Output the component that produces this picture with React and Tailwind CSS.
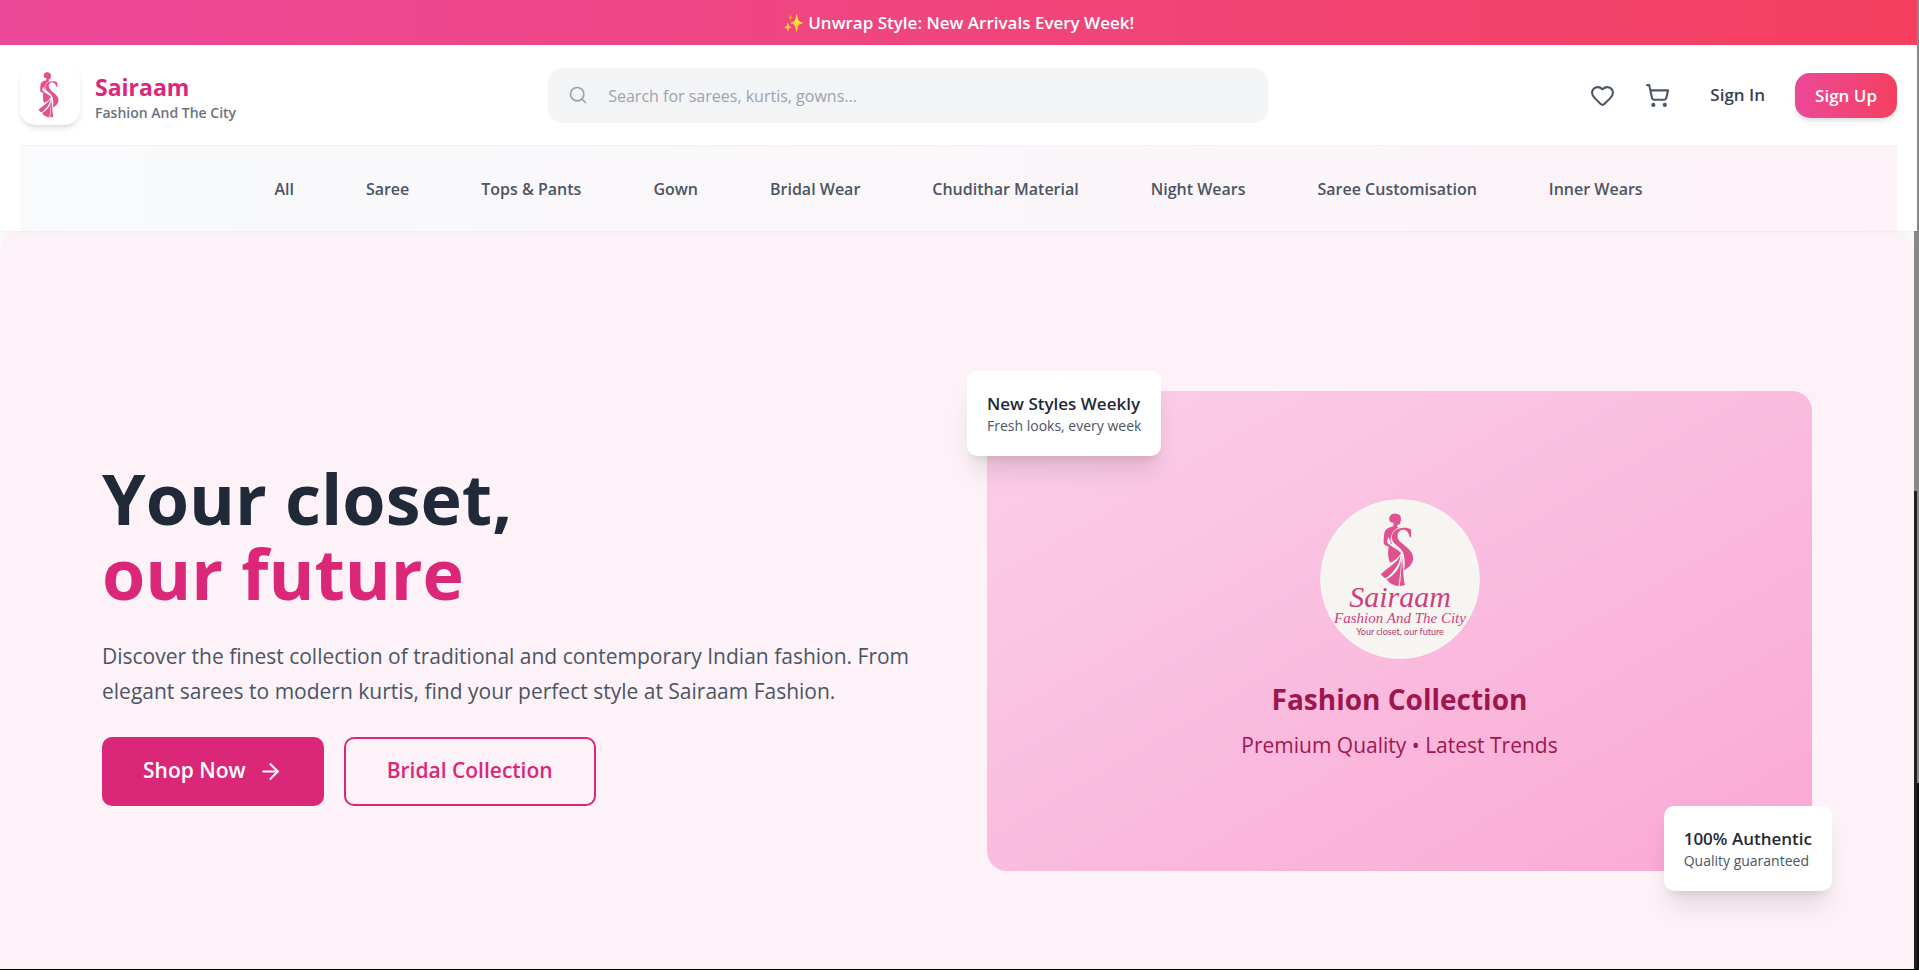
import { Heart, ShoppingCart, Search, ArrowRight } from 'lucide-react'

const categories = [
  'All', 'Saree', 'Tops & Pants', 'Gown', 'Bridal Wear',
  'Chudithar Material', 'Night Wears', 'Saree Customisation', 'Inner Wears',
]

// Lady draped in a saree with the S of the brand
const Figure = (props) => (
  <svg viewBox="238 100 100 220" fill="#e0528f" aria-hidden="true" {...props}>
    <path d="M268 108C272 101 284 100 290 103C297 105 301 110 299 116L301 122L298 124L298 131C296 136 291 133 289 136L287 146L277 143L278 129C272 130 266 126 265 120C264 115 265 111 268 108Z" />
    <path d="M283 138C270 141 258 144 252 154C248 166 249 176 248 188C249 196 256 198 263 200L266 195C261 191 258 188 259 182L262 171L266 179C268 184 270 186 268 190L274 193C268 184 268 176 271 166C274 156 282 149 292 143Z" />
    <path d="M330 150C318 140 290 143 279 155C269 167 271 182 282 192C294 202 307 210 309 228C311 245 313 256 308 270C324 264 337 248 336 234C335 212 313 200 300 188C287 177 286 160 298 152C310 146 322 152 326 172L330 172Z" />
    <path d="M265 193C276 204 293 208 300 220C292 234 279 244 268 248C260 236 260 208 265 193Z" />
    <path d="M298 226C290 245 262 262 240 281C244 287 248 291 254 294C276 278 296 255 298 226Z" />
    <path d="M300 232C300 262 280 285 257 297C264 306 272 314 292 318C297 290 300 262 300 232Z" />
    <path d="M303 226L306 270C307 290 309 306 312 314L296 318C300 290 301 255 303 226Z" />
  </svg>
)

const Emblem = () => (
  <svg viewBox="0 0 160 160" className="h-40 w-40 rounded-full" role="img" aria-label="Sairaam">
    <circle cx="80" cy="80" r="80" fill="#f6f5f2" />
    <Figure x="60" y="14" width="34" height="74" />
    <g textAnchor="middle" fill="#cf3f7c" fontStyle="italic" fontFamily="'Liberation Serif', serif">
      <text x="80" y="108" fontSize="30">Sairaam</text>
      <text x="80" y="124" fontSize="15">Fashion And The City</text>
    </g>
    <text x="80" y="136" fontSize="9" textAnchor="middle" fill="#b23a6d" fontFamily="Lato, sans-serif">Your closet, our future</text>
  </svg>
)

const Badge = ({ title, text, className }) => (
  <div className={`absolute rounded-[10px] bg-white p-5 shadow-xl ${className}`}>
    <div className="text-[17px] font-semibold leading-[25px] text-[#1f2937]">{title}</div>
    <div className="text-sm leading-5 text-[#4b5563]">{text}</div>
  </div>
)

export default function App() {
  return (
    <div className="flex min-h-screen flex-col border-b border-black bg-slate-50 font-['Open_Sans',sans-serif]">
      <header className="relative z-10 border-r-2 border-[#888] bg-white shadow-xs">
        <div className="bg-gradient-to-r from-[#ec4899] to-[#f43f5e] py-3 text-center text-[17px] font-semibold leading-[21px] text-white">
          ✨ Unwrap Style: New Arrivals Every Week!
        </div>

        <div className="px-5">
          <div className="flex h-[100px] items-center justify-between">
            <a href="#home" className="flex items-center gap-[15px]">
              <span className="flex h-15 w-15 items-center justify-center rounded-[15px] bg-white pr-1 shadow-md">
                <Figure className="h-[46px] w-[21px]" />
              </span>
              <span className="flex flex-col pt-2">
                <span className="text-[23px] font-bold leading-7 text-[#db2777]">Sairaam</span>
                <span className="text-sm font-semibold leading-6 text-[#6b7280]">Fashion And The City</span>
              </span>
            </a>

            <label className="flex h-[55px] max-w-[720px] flex-1 items-center rounded-[15px] bg-[#f3f4f6] px-5">
              <Search size={20} strokeWidth={2} className="text-[#9ca3af]" />
              <input type="text" aria-label="Search" placeholder="Search for sarees, kurtis, gowns..."
                className="ml-5 flex-1 bg-transparent pt-[2px] text-base placeholder:text-[#9ca3af] focus:outline-none" />
            </label>

            <div className="flex items-center">
              <button aria-label="Wishlist" className="mr-[10px] p-[10px] text-[#4b5563]"><Heart size={25} /></button>
              <button aria-label="Cart" className="p-[10px] text-[#4b5563]"><ShoppingCart size={25} /></button>
              <a href="#signin" className="pr-5 pl-[30px] text-[17px] font-semibold text-[#374151]">Sign In</a>
              <a href="#signup" className="ml-[10px] rounded-[15px] bg-gradient-to-r from-[#ec4899] to-[#f43f5e] px-5 py-[10px] text-[17px] font-semibold leading-[25px] text-white shadow-md">Sign Up</a>
            </div>
          </div>

          <nav className="flex h-[86px] items-center justify-center gap-[72px] border-t border-[#f3f4f6] bg-gradient-to-r from-[#f8fafc] to-[#fdf2f8] text-base font-semibold text-[#4b5563]">
            {categories.map(c => <a key={c} href="#category">{c}</a>)}
          </nav>
        </div>
      </header>

      <main className="flex flex-1">
        <section className="flex flex-1 items-center rounded-t-[20px] bg-[#fdf2f8] px-[102px] pt-[62px]">
          <div className="grid flex-1 grid-cols-2 items-center gap-[60px]">
            <div>
              <h1 className="pt-1 text-[70px] font-bold leading-[75px] text-[#1f2937]">
                Your closet,
                <span className="block text-[#db2777]">our future</span>
              </h1>
              <p className="mt-7 text-[21px] leading-[35px] text-[#4b5563]">
                Discover the finest collection of traditional and contemporary Indian fashion. From elegant sarees to modern kurtis, find your perfect style at Sairaam Fashion.
              </p>
              <div className="mt-7 flex gap-5">
                <button className="flex h-[69px] items-center gap-3 rounded-[10px] bg-[#db2777] px-[41px] text-[21px] font-semibold text-white">
                  Shop Now <ArrowRight size={25} />
                </button>
                <button className="h-[69px] rounded-[10px] border-2 border-[#db2777] px-[41px] text-[21px] font-semibold text-[#db2777]">
                  Bridal Collection
                </button>
              </div>
            </div>

            <div className="relative">
              <div className="flex h-[480px] flex-col items-center justify-center rounded-[20px] bg-gradient-to-br from-[#fbcfe8] to-[#f9a8d4]">
                <Emblem />
                <h2 className="mt-5 text-[28px] font-bold leading-10 text-[#9d174d]">Fashion Collection</h2>
                <p className="mt-2 text-[21px] leading-9 text-[#9d174d]">Premium Quality • Latest Trends</p>
              </div>
              <Badge title="New Styles Weekly" text="Fresh looks, every week" className="-left-5 -top-5" />
              <Badge title="100% Authentic" text="Quality guaranteed" className="-bottom-5 -right-5" />
            </div>
          </div>
        </section>

        {/* Scroll tracks */}
        <div className="flex bg-[#111]">
          <div className="w-[3px] bg-[#1f2120]">
            <div className="h-[260px] bg-[#888]" />
          </div>
          <div className="w-[2px]">
            <div className="h-[552px] bg-[#888]" />
          </div>
        </div>
      </main>
    </div>
  )
}
